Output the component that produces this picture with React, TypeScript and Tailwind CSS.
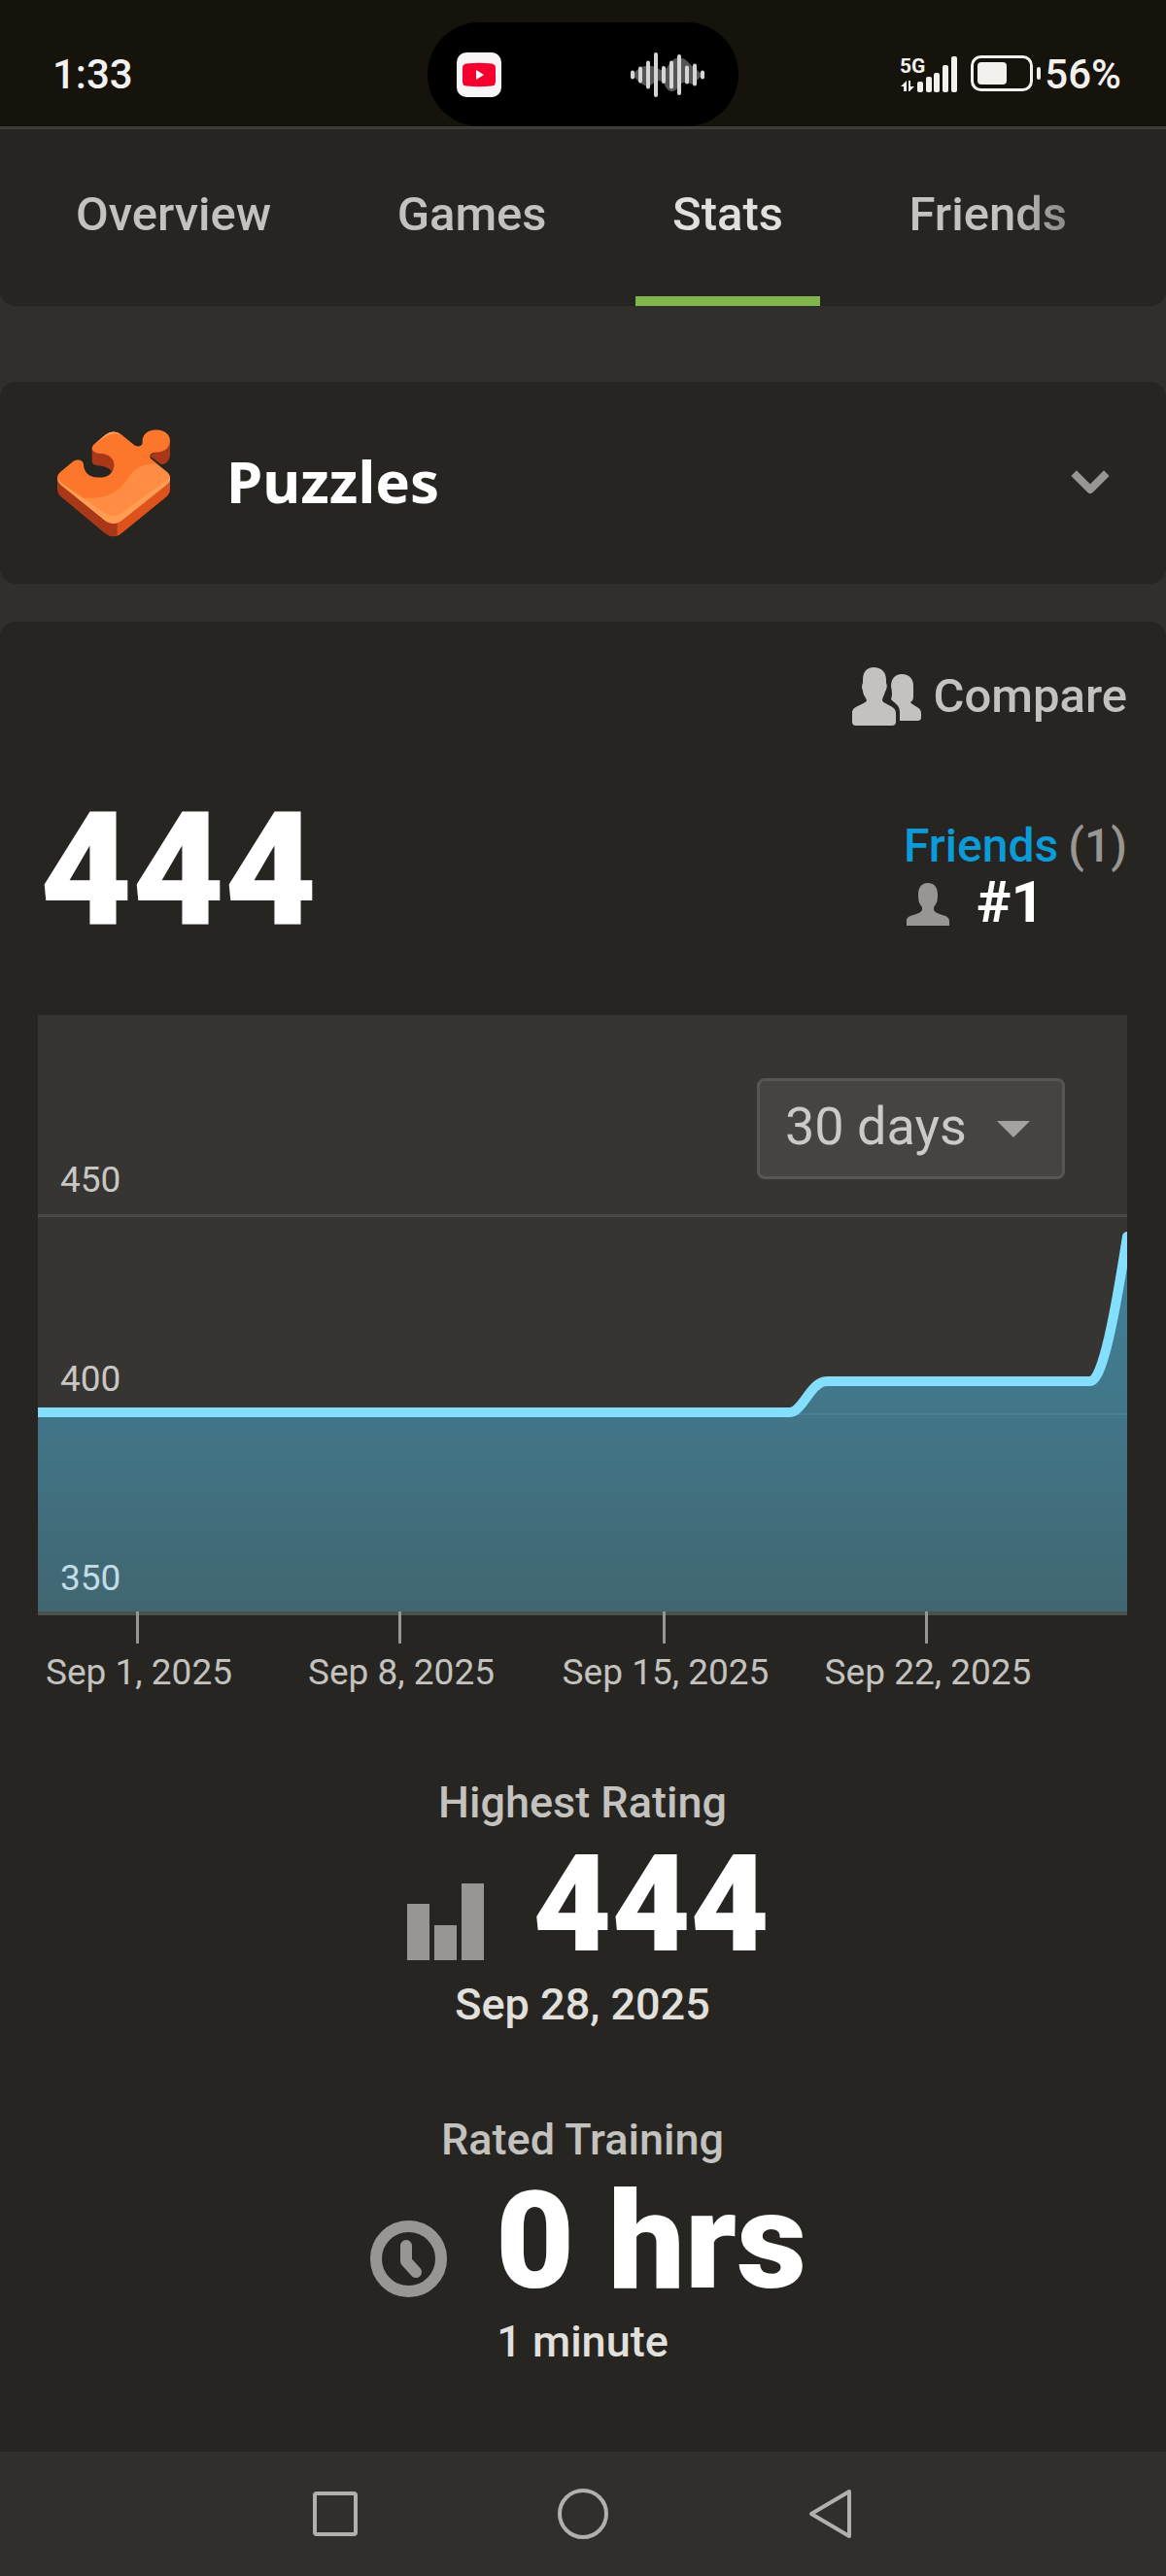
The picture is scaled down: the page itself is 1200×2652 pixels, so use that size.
import { ReactNode, useState } from 'react'

const tabs = ['Overview', 'Games', 'Stats', 'Friends']

const yLabels = [
    { label: '450', y: 182, color: '#c8c7c4' },
    { label: '400', y: 387, color: '#c8c7c4' },
    { label: '350', y: 592, color: '#c0dde6' },
]

const xLabels = [
    { label: 'Sep 1, 2025', x: 103 },
    { label: 'Sep 8, 2025', x: 373 },
    { label: 'Sep 15, 2025', x: 645 },
    { label: 'Sep 22, 2025', x: 915 },
]

// center x and height of every bar
const wave = [
    [3, 9], [11, 17], [19, 29], [27, 46], [35, 18], [43, 29], [51, 42], [59, 19], [67, 23], [75, 9],
]

const linePath = 'M-10 409H774C787 409 795 377 812 377H1083C1096 377 1109 305 1121 228'

function StatusBar() {
    return (
        <div className="grid h-[133px] grid-cols-3 items-center border-b-[3px] border-[#3d3c39] bg-[#16130c] text-[42px] leading-none font-medium text-[#f3f1ee]">
            <div className="pt-6 pl-[54px]">1:33</div>
            <div className="mt-[23px] flex h-[107px] w-[320px] items-center justify-between justify-self-center rounded-full bg-black pr-[34px] pl-[30px]">
                <svg width="46" height="46" viewBox="0 0 46 46">
                    <rect width="46" height="46" rx="10" fill="#f7f5f6" />
                    <path d="M10 11.500Q23 10 36 11.500Q40 12 40 16V30Q40 34 36 34.500Q23 36 10 34.500Q6 34 6 30V16Q6 12 10 11.500Z" fill="#f5002f" />
                    <path d="M20 18L28 23L20 28Z" fill="#fff" />
                </svg>
                <svg width="78" height="46" viewBox="0 0 78 46">
                    <path d="M3 23C12 12 18 13 27 15C34 20 36 20 40 13C48 2 55 4 62 12L75 23L65 33C56 30 53 30 49 37C44 43 38 40 35 31C30 27 26 30 20 35C15 35 9 31 3 23Z" fill="#555" />
                    {wave.map(([x, h]) => (
                        <rect key={x} x={x - 2} y={23 - h / 2} width="4" height={h} rx="2" fill="#d5d5d5" />
                    ))}
                </svg>
            </div>
            <div className="flex items-center justify-end gap-[3px] pt-6 pr-[46px]">
                <svg width="146" height="40" viewBox="0 0 146 40" fill="#f3f1ee" className="overflow-visible">
                    <text x="0" y="18" fontSize="21" fontWeight="700" fontFamily="Roboto, sans-serif">5G</text>
                    <path d="M1 32L7 26V37H4V32ZM9 26H11V32H15L10 37H9Z" />
                    <rect x="18" y="27" width="6" height="11" rx="2" />
                    <rect x="27" y="22" width="6" height="16" rx="2" />
                    <rect x="35" y="18" width="6" height="20" rx="2" />
                    <rect x="44" y="10" width="6" height="28" rx="2" />
                    <rect x="53" y="1" width="6" height="37" rx="2" />
                    <rect x="74.500" y="1.500" width="61" height="34" rx="9" fill="none" stroke="#f3f1ee" strokeWidth="3" />
                    <rect x="80" y="7" width="30" height="23" rx="4" />
                    <rect x="141" y="12" width="4" height="13" rx="2" />
                </svg>
                <span>56%</span>
            </div>
        </div>
    )
}

function PuzzleIcon() {
    return (
        <svg width="116" height="111" viewBox="177 215 348 332">
            <path d="M177 362V400Q177 413 188 422L325 536Q350 555 374 536L514 422Q525 412 525 398V362Z" fill="#a83817" />
            <path d="M362 500L525 366V398Q525 412 514 422L374 536Q368 542 362 543Z" fill="#de521c" />
            <path d="M284 272V315Q286 325 302 326C325 328 342 335 345 347Q352 340 352 318L340 284Z" fill="#a83817" />
            <path d="M525 250V294C523 316 507 325 496 322L462 296L490 280Z" fill="#a83817" />
            <path
                d="M325 232Q350 212 376 232L411 260C423 271 439 268 440 255C438 234 452 216 482 216C510 216 525 232 525 250C523 274 507 286 478 286C464 289 459 296 466 305L514 345Q525 354 525 365Q525 376 515 385L374 497Q350 514 326 497L188 386Q177 376 177 364Q177 354 188 345L224 315C240 304 257 310 258 324C259 348 277 364 306 364C338 364 352 345 352 323C350 302 334 289 304 289C288 286 278 275 288 263Z"
                fill="#fc762b"
            />
            <path d="M235 424C295 432 355 425 388 375C412 335 440 320 480 320L514 345Q525 354 525 365Q525 376 515 385L374 497Q350 514 326 497Z" fill="#ff8c42" />
            <path d="M177 362Q178 371 188 379L325 474Q350 490 374 474L525 364Q526 376 515 385L374 497Q350 514 326 497L188 386Q177 376 177 362Z" fill="#ff9d54" />
            <path d="M288 263L325 232Q350 212 376 232Q350 222 328 236Z" fill="#ff9d54" />
        </svg>
    )
}

function RatingChart() {
    const [range, setRange] = useState('30 days')

    return (
        <div className="relative mt-[61px]">
            <svg viewBox="0 0 1121 700" className="block h-auto w-full" fontFamily="Roboto, sans-serif" fontSize="37">
                <defs>
                    <linearGradient id="area" x1="0" y1="228" x2="0" y2="615" gradientUnits="userSpaceOnUse">
                        <stop offset="0" stopColor="#428298" />
                        <stop offset="0.5" stopColor="#417587" />
                        <stop offset="1" stopColor="#416671" />
                    </linearGradient>
                    <clipPath id="plot">
                        <rect width="1121" height="617" />
                    </clipPath>
                </defs>
                <rect width="1121" height="615" fill="#373531" />
                <rect y="205" width="1121" height="3" fill="#4b4a46" />
                <g clipPath="url(#plot)">
                    <path d={`${linePath}V615H-10Z`} fill="url(#area)" />
                    <rect y="410" width="1121" height="2" fill="#4b8093" />
                    <path d={linePath} fill="none" stroke="#84dfff" strokeWidth="10" strokeLinecap="round" strokeLinejoin="round" />
                </g>
                <rect y="614" width="1121" height="4" fill="#4b4f4e" />
                {yLabels.map(({ label, y, color }) => (
                    <text key={label} x="23" y={y} fill={color}>{label}</text>
                ))}
                {xLabels.map(({ label, x }) => (
                    <g key={label}>
                        <rect x={x - 2} y="614" width="3" height="33" fill="#979692" />
                        <text x={x + 1} y="689" textAnchor="middle" fill="#c3c2bf">{label}</text>
                    </g>
                ))}
            </svg>
            <div className="absolute top-[65px] right-16">
                <select
                    aria-label="Time range"
                    value={range}
                    onChange={(e) => setRange(e.target.value)}
                    className="h-[104px] w-[317px] appearance-none rounded-lg border-[3px] border-[#575652] bg-[#454441] pb-1 pl-[26px] text-[54px] leading-[60px] text-[#cbcac7]"
                >
                    <option>7 days</option>
                    <option>30 days</option>
                    <option>90 days</option>
                    <option>1 year</option>
                </select>
                <svg width="34" height="17" viewBox="0 0 34 17" className="pointer-events-none absolute top-11 right-9">
                    <path d="M0 0H34L17 17Z" fill="#a3a29f" />
                </svg>
            </div>
        </div>
    )
}

function StatBlock({ title, value, note, icon }: { title: string; value: string; note: string; icon: ReactNode }) {
    return (
        <div className="flex h-[347px] flex-col items-center text-[45px] leading-[52px] font-medium">
            <h3 className="text-[#c3c2bf]">{title}</h3>
            <div className="flex h-[156px] items-center gap-[50px] pl-3">
                <span className="pt-9">{icon}</span>
                <span className="text-[140px] leading-[156px] font-black text-white">{value}</span>
            </div>
            <p className="text-[#e1e0dc]">{note}</p>
        </div>
    )
}

export default function App() {
    const [activeTab, setActiveTab] = useState('Stats')

    return (
        <div className="min-h-screen bg-[#302f2c] font-[Roboto,sans-serif]">
            <StatusBar />

            <nav className="relative flex h-[182px] justify-between rounded-b-2xl bg-[#262522] pr-[64px] pl-10">
                {tabs.map((tab) => (
                    <button
                        key={tab}
                        onClick={() => setActiveTab(tab)}
                        className={
                            tab === activeTab
                                ? 'border-b-[10px] border-[#81b64c] px-[38px] pt-1 text-[49px] font-medium text-[#e1e0dc]'
                                : 'border-b-[10px] border-transparent px-[38px] pt-1 text-[49px] font-medium text-[#c3c2bf]'
                        }
                    >
                        {tab}
                    </button>
                ))}
                <div className="pointer-events-none absolute inset-y-0 right-0 w-[160px] rounded-br-2xl bg-linear-to-r from-transparent to-[#262522]" />
            </nav>

            <button className="mt-[78px] flex h-[208px] w-full items-center rounded-2xl bg-[#262522] pr-14 pl-[59px] text-left">
                <PuzzleIcon />
                <span className="ml-[58px] flex-1 pb-1 font-['Noto_Sans',sans-serif] text-[60px] font-bold text-white">Puzzles</span>
                <svg width="42" height="28" viewBox="0 0 42 28">
                    <path d="M6 7L20 21L34 7" fill="none" stroke="#979692" strokeWidth="8" strokeLinejoin="round" strokeLinecap="square" />
                </svg>
            </button>

            <main className="mt-[39px] rounded-t-2xl bg-[#262522] pt-[47px] pr-10 pl-[39px]">
                <div className="flex justify-end">
                    <button className="flex items-center gap-3 text-[49px] leading-[60px] font-medium text-[#c3c2bf]">
                        <svg width="72" height="60" viewBox="0 0 72 60" fill="#c3c2bf">
                            <path d="M23 0C31 0 36 5 36 13V16Q38 20 35 25C34 29 32 31 32 34C34 39 46 39 46 47V56Q46 60 42 60H5Q1 60 1 56V47C1 39 14 39 16 34C15 31 12 28 12 24Q10 20 12 16V13C12 5 16 0 23 0Z" />
                            <path d="M52 7C60 7 64 12 64 19V31Q64 34 61 36C64 40 72 41 72 47V52Q72 55 68 55H50V46C50 38 43 36 41 33Q43 27 41 20C41 12 45 7 52 7Z" />
                        </svg>
                        Compare
                    </button>
                </div>

                <div className="mt-[61px] flex items-center justify-between">
                    <div className="pl-0.5 text-[164px] leading-[176px] font-black text-white">444</div>
                    <div className="w-[230px] pt-[10px] font-medium">
                        <div className="flex justify-between text-[48px] leading-[56px]">
                            <a href="#friends" className="text-[#0a9bd8]">Friends</a>
                            <span className="text-[#979692]">(1)</span>
                        </div>
                        <div className="flex items-center gap-7 pl-[3px]">
                            <svg width="44" height="44" viewBox="0 0 44 44" fill="#979692" className="mt-1">
                                <path d="M22 0C29 0 32 5 32 12C32 19 31 21 28 25V28C32 34 44 32 44 39V44H0V39C0 32 12 34 16 28V25C13 21 12 19 12 12C12 5 15 0 22 0Z" />
                            </svg>
                            <span className="text-[60px] leading-[60px] font-bold text-white">#1</span>
                        </div>
                    </div>
                </div>

                <RatingChart />

                <section className="mt-[85px]">
                    <StatBlock
                        title="Highest Rating"
                        value="444"
                        note="Sep 28, 2025"
                        icon={
                            <svg width="79" height="79" viewBox="0 0 79 79" fill="#979692">
                                <rect y="21" width="23" height="58" />
                                <rect x="28" y="43" width="23" height="36" />
                                <rect x="56" width="23" height="79" />
                            </svg>
                        }
                    />
                    <StatBlock
                        title="Rated Training"
                        value="0 hrs"
                        note="1 minute"
                        icon={
                            <svg width="79" height="79" viewBox="0 0 79 79" fill="none" stroke="#979692">
                                <circle cx="39.500" cy="39.500" r="33.500" strokeWidth="12" />
                                <path d="M37 26V42L47 53" strokeWidth="12" strokeLinecap="round" strokeLinejoin="round" />
                            </svg>
                        }
                    />
                </section>
            </main>

            <footer className="flex h-32 items-center justify-center gap-[205px]">
                <button aria-label="Recent apps">
                    <svg width="48" height="52" viewBox="0 0 48 52" fill="none" stroke="#b1b0ad" strokeWidth="4">
                        <rect x="3" y="5" width="42" height="42" rx="2" />
                    </svg>
                </button>
                <button aria-label="Home">
                    <svg width="52" height="52" viewBox="0 0 52 52" fill="none" stroke="#b1b0ad" strokeWidth="4">
                        <circle cx="26" cy="26" r="24" />
                    </svg>
                </button>
                <button aria-label="Back">
                    <svg width="48" height="52" viewBox="0 0 48 52" fill="none" stroke="#b1b0ad" strokeWidth="4" strokeLinejoin="round">
                        <path d="M43 3V49L4 26Z" />
                    </svg>
                </button>
            </footer>
        </div>
    )
}
